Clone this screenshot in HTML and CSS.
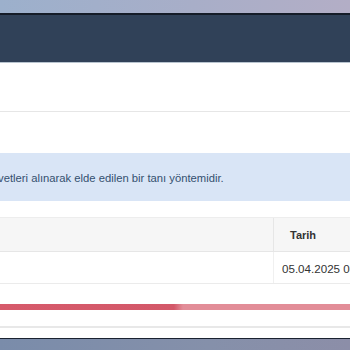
FILE: index.html
```html
<!DOCTYPE html>
<html lang="tr">
<head>
<meta charset="utf-8">
<link rel="stylesheet" href="styles.css">
</head>
<body>
<div class="topstrip"></div>
<header class="navbar"></header>
<section class="titlebar"></section>
<section class="spacer"></section>
<div class="alert"><span class="alert-text">vetleri alınarak elde edilen bir tanı yöntemidir.</span></div>
<table class="grid">
  <thead>
    <tr><th class="c1"></th><th class="c2">Tarih</th></tr>
  </thead>
  <tbody>
    <tr><td class="c1"></td><td class="c2">05.04.2025 08:30</td></tr>
  </tbody>
</table>
<div class="progress"><div class="progress-fill" style="width:183px"></div></div>
<div class="footer-line"></div>
<div class="bottomstrip"></div>
</body>
</html>
```

FILE: styles.css
```css
html, body {
  margin: 0;
  padding: 0;
  width: 350px;
  height: 350px;
  overflow: hidden;
  background: #ffffff;
  font-family: "Liberation Sans", Arial, sans-serif;
}
.topstrip {
  height: 13px;
  background: linear-gradient(90deg, #9cb0cc 0%, #a8aec8 55%, #b3aec6 100%);
  border-bottom: 2px solid #151c28;
}
.navbar {
  height: 47px;
  background: #304158;
  border-bottom: 1px solid #b8c4cf;
}
.titlebar {
  height: 48px;
  border-bottom: 1px solid #e6e6e6;
}
.spacer {
  height: 41px;
}
.alert {
  height: 48px;
  background: #d9e5f6;
  display: flex;
  align-items: center;
  white-space: nowrap;
  overflow: hidden;
}
.alert-text {
  margin-left: -2px;
  font-size: 11.25px;
  color: #34506f;
  padding-top: 2px;
}
.grid {
  margin-top: 16px;
  width: 100%;
  border-collapse: collapse;
  table-layout: fixed;
  font-size: 11px;
  color: #333333;
}
.grid .c1 { width: 273px; }
.grid th {
  height: 33px;
  background: #f6f6f6;
  border-top: 1px solid #ededed;
  border-bottom: 1px solid #e6e6e6;
  text-align: left;
  font-weight: bold;
  padding: 0;
}
.grid th.c2 {
  border-left: 1px solid #e6e6e6;
  padding-left: 16px;
}
.grid td {
  height: 30px;
  border-bottom: 1px solid #ebebeb;
  padding: 0;
  white-space: nowrap;
  overflow: hidden;
  font-size: 11.6px;
}
.grid td.c2 {
  border-left: 1px solid #f0f0f0;
  padding-left: 8px;
  padding-top: 1px;
}
.progress {
  margin-top: 20px;
  height: 6px;
  background: #e28d98;
  display: flex;
}
.progress-fill {
  background: linear-gradient(90deg, #d65a6b 0%, #d35869 95%, #e28d98 100%);
}
.footer-line {
  margin-top: 16px;
  height: 2px;
  background: #e8e8e8;
  margin-bottom: 10px;
}
.bottomstrip {
  height: 12px;
  border-top: 1px solid #1a2230;
  background: linear-gradient(90deg, #7a8caa 0%, #8590aa 60%, #8c8ea8 100%);
}
```
